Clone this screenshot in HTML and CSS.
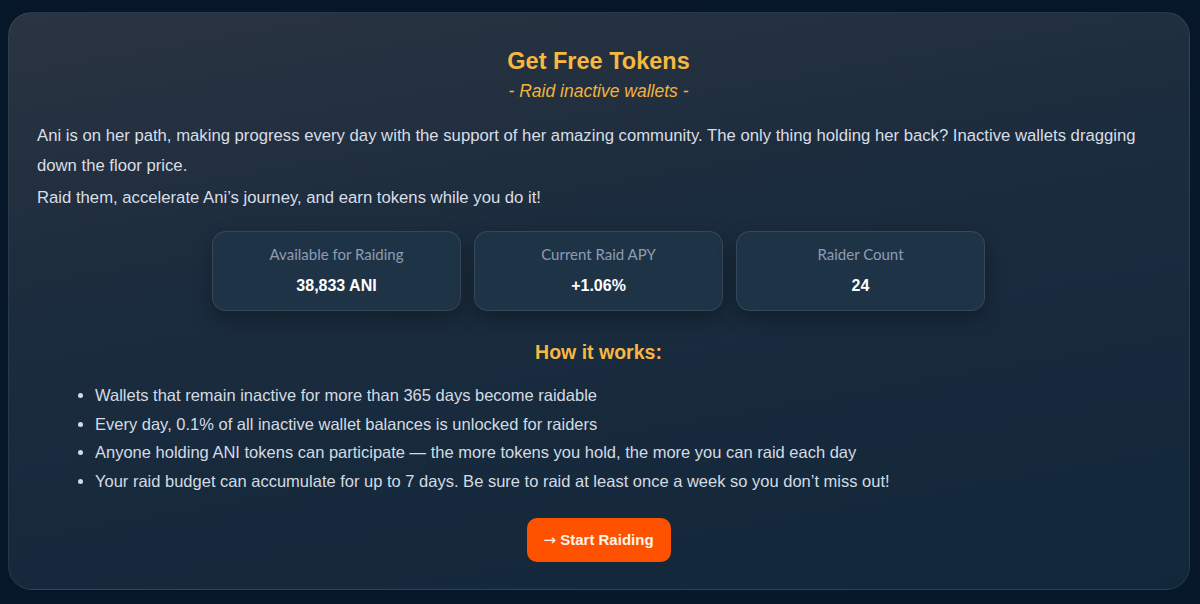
FILE: index.html
```html
<!DOCTYPE html>
<html lang="en">
<head>
  <meta charset="UTF-8">
  <meta name="viewport" content="width=device-width, initial-scale=1.0">
  <title>Get Free Tokens</title>
  <link rel="stylesheet" href="styles.css">
</head>
<body>
  <div class="raid-card">
    <div class="raid-head">
      <h1>Get Free Tokens</h1>
      <p class="tagline">- Raid inactive wallets -</p>
    </div>

    <p class="intro">Ani is on her path, making progress every day with the support of her amazing community. The only thing holding her back? Inactive wallets dragging down the floor price.</p>
    <p class="intro">Raid them, accelerate Ani’s journey, and earn tokens while you do it!</p>

    <!-- stats -->
    <div class="stats">
      <div class="stat">
        <div class="stat-label">Available for Raiding</div>
        <div class="stat-value">38,833 ANI</div>
      </div>
      <div class="stat">
        <div class="stat-label">Current Raid APY</div>
        <div class="stat-value">+1.06%</div>
      </div>
      <div class="stat">
        <div class="stat-label">Raider Count</div>
        <div class="stat-value">24</div>
      </div>
    </div>

    <h2>How it works:</h2>
    <ul class="rules">
      <li>Wallets that remain inactive for more than 365 days become raidable</li>
      <li>Every day, 0.1% of all inactive wallet balances is unlocked for raiders</li>
      <li>Anyone holding ANI tokens can participate — the more tokens you hold, the more you can raid each day</li>
      <li>Your raid budget can accumulate for up to 7 days. Be sure to raid at least once a week so you don’t miss out!</li>
    </ul>

    <div class="actions">
      <button class="raid-button"><span class="arrow">→</span> Start Raiding</button>
    </div>
  </div>
</body>
</html>
```

FILE: styles.css
```css
html, body {
  height: 100%;
}
body {
  margin: 0;
  padding: 12px 10px 14px 8px;
  box-sizing: border-box;
  font-family: 'Liberation Sans', Arial, sans-serif;
  background: #06172a;
  color: #d4dbe3;
}
.raid-card {
  height: 100%;
  box-sizing: border-box;
  padding: 30px 29px 28px 28px;
  border-radius: 24px;
  border: 1px solid rgba(255,255,255,0.08);
  background: linear-gradient(170deg, #2b3441 0%, #1b2c3e 40%, #12273a 100%);
}
.raid-head {
  text-align: center;
  margin-bottom: 18px;
}
h1 {
  margin: 0;
  font-size: 23.5px;
  font-weight: 700;
  color: #f7b841;
  line-height: 36px;
}
.tagline {
  margin: 0;
  font-size: 17.5px;
  font-style: italic;
  color: #f2b23c;
  line-height: 24px;
}
.intro {
  margin: 0 0 2px;
  font-size: 16.7px;
  line-height: 30px;
  color: #d8dee6;
}
.stats {
  display: flex;
  justify-content: center;
  gap: 13px;
  margin-top: 18px;
}
.stat {
  width: 249px;
  height: 80px;
  box-sizing: border-box;
  padding-top: 11px;
  text-align: center;
  background: #1f3347;
  border: 1px solid rgba(255,255,255,0.1);
  border-radius: 14px;
  box-shadow: 0 8px 20px rgba(0,0,0,0.3);
}
.stat-label {
  font-family: Lato, sans-serif;
  font-size: 15px;
  color: #8d9db1;
  line-height: 22px;
}
.stat-value {
  margin-top: 11px;
  font-size: 16px;
  font-weight: 700;
  color: #ffffff;
  line-height: 20px;
}
h2 {
  margin: 28px 0 0;
  text-align: center;
  font-size: 19.5px;
  color: #f7b841;
  line-height: 26px;
}
.rules {
  margin: 16px 0 0;
  padding-left: 58px;
  font-size: 16.5px;
  line-height: 28.5px;
  color: #d4dbe3;
}
.actions {
  display: flex;
  justify-content: center;
  margin-top: 23px;
}
.raid-button {
  width: 144px;
  height: 44px;
  border: none;
  border-radius: 10px;
  background: #ff5200;
  color: #fff4e8;
  font-family: 'Liberation Sans', Arial, sans-serif;
  font-size: 15px;
  font-weight: 700;
  cursor: pointer;
}
.arrow {
  font-family: 'DejaVu Sans', sans-serif;
  font-weight: 400;
}
```
